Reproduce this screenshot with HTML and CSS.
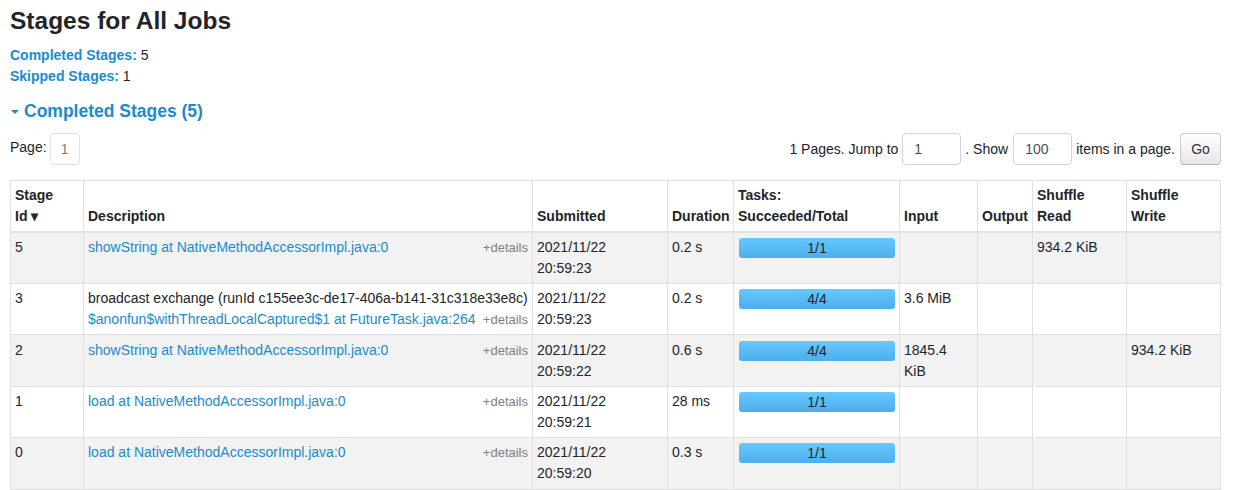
FILE: index.html
```html
<!DOCTYPE html>
<html>
<head>
<meta charset="utf-8">
<link rel="stylesheet" href="styles.css">
</head>
<body>
<div class="page">
  <h3 class="title">Stages for All Jobs</h3>
  <ul class="summary">
    <li><a class="lbl">Completed Stages:</a> 5</li>
    <li><a class="lbl">Skipped Stages:</a> 1</li>
  </ul>
  <h4 class="collapse-head"><span class="arrow"></span>Completed Stages (5)</h4>

  <div class="pager">
    <div class="pager-left">
      <span class="page-label">Page:</span>
      <span class="page-box">1</span>
    </div>
    <div class="pager-right">
      <span>1 Pages. Jump to</span>
      <span class="inp jump">1</span>
      <span>. Show</span>
      <span class="inp show">100</span>
      <span>items in a page.</span>
      <span class="go">Go</span>
    </div>
  </div>

  <table class="stages">
    <colgroup>
      <col class="c-id"><col class="c-desc"><col class="c-sub"><col class="c-dur"><col class="c-task"><col class="c-in"><col class="c-out"><col class="c-sr"><col class="c-sw">
    </colgroup>
    <thead>
      <tr>
        <th>Stage<br>Id ▾</th>
        <th>Description</th>
        <th>Submitted</th>
        <th>Duration</th>
        <th>Tasks:<br>Succeeded/Total</th>
        <th>Input</th>
        <th>Output</th>
        <th>Shuffle<br>Read</th>
        <th>Shuffle<br>Write</th>
      </tr>
    </thead>
    <tbody>
      <tr class="odd">
        <td>5</td>
        <td><span class="details">+details</span><a class="name">showString at NativeMethodAccessorImpl.java:0</a></td>
        <td>2021/11/22<br>20:59:23</td>
        <td>0.2 s</td>
        <td><div class="progress"><span>1/1</span></div></td>
        <td></td>
        <td></td>
        <td>934.2 KiB</td>
        <td></td>
      </tr>
      <tr>
        <td>3</td>
        <td><div class="desc-text">broadcast exchange (runId c155ee3c-de17-406a-b141-31c318e33e8c)</div><span class="details">+details</span><a class="name">$anonfun$withThreadLocalCaptured$1 at FutureTask.java:264</a></td>
        <td>2021/11/22<br>20:59:23</td>
        <td>0.2 s</td>
        <td><div class="progress"><span>4/4</span></div></td>
        <td>3.6 MiB</td>
        <td></td>
        <td></td>
        <td></td>
      </tr>
      <tr class="odd">
        <td>2</td>
        <td><span class="details">+details</span><a class="name">showString at NativeMethodAccessorImpl.java:0</a></td>
        <td>2021/11/22<br>20:59:22</td>
        <td>0.6 s</td>
        <td><div class="progress"><span>4/4</span></div></td>
        <td>1845.4<br>KiB</td>
        <td></td>
        <td></td>
        <td>934.2 KiB</td>
      </tr>
      <tr>
        <td>1</td>
        <td><span class="details">+details</span><a class="name">load at NativeMethodAccessorImpl.java:0</a></td>
        <td>2021/11/22<br>20:59:21</td>
        <td>28 ms</td>
        <td><div class="progress"><span>1/1</span></div></td>
        <td></td>
        <td></td>
        <td></td>
        <td></td>
      </tr>
      <tr class="odd">
        <td>0</td>
        <td><span class="details">+details</span><a class="name">load at NativeMethodAccessorImpl.java:0</a></td>
        <td>2021/11/22<br>20:59:20</td>
        <td>0.3 s</td>
        <td><div class="progress"><span>1/1</span></div></td>
        <td></td>
        <td></td>
        <td></td>
        <td></td>
      </tr>
    </tbody>
  </table>
</div>
</body>
</html>
```

FILE: styles.css
```css
html, body {
  margin: 0;
  padding: 0;
  background: #fff;
}
body {
  font-family: "Liberation Sans", Arial, sans-serif;
  font-size: 14px;
  line-height: 21px;
  color: #212529;
}
.page {
  padding: 0 10px;
}
.title {
  margin: 6px 0 10px 0;
  font-size: 24.5px;
  line-height: 29px;
  font-weight: bold;
  color: #212529;
}
.summary {
  list-style: none;
  margin: 0;
  padding: 0;
}
.lbl {
  color: #1a8bcf;
  font-weight: bold;
}
.collapse-head {
  margin: 13px 0 0 0;
  font-size: 17.5px;
  line-height: 22px;
  font-weight: bold;
  color: #1a8bcf;
  display: flex;
  align-items: center;
}
.arrow {
  display: inline-block;
  width: 0;
  height: 0;
  border-left: 4.5px solid transparent;
  border-right: 4.5px solid transparent;
  border-top: 4.5px solid #1a8bcf;
  margin-left: 0.5px;
  margin-right: 5.5px;
  margin-top: 1px;
}
.pager {
  margin-top: 11px;
  display: flex;
  justify-content: space-between;
  align-items: flex-start;
  margin-right: 3px;
}
.pager-left {
  display: flex;
  align-items: flex-start;
}
.page-label {
  padding-top: 4px;
  margin-right: 3px;
}
.page-box {
  display: inline-block;
  box-sizing: border-box;
  height: 32px;
  width: 30px;
  border: 1px solid #dee2e6;
  border-radius: 4px;
  text-align: center;
  line-height: 30px;
  color: #8a7e72;
}
.pager-right {
  display: flex;
  align-items: center;
  gap: 4px;
}
.inp {
  display: inline-block;
  box-sizing: border-box;
  height: 32px;
  border: 1px solid #ced4da;
  border-radius: 4px;
  line-height: 30px;
  padding: 0 11px;
  color: #495057;
}
.jump { width: 59px; }
.show { width: 59px; margin-left: 1px; }
.go {
  display: inline-block;
  box-sizing: border-box;
  height: 32px;
  width: 41px;
  margin-left: 1px;
  border: 1px solid #ccc;
  border-bottom-color: #b3b3b3;
  border-radius: 4px;
  background: linear-gradient(#ffffff, #e6e6e6);
  text-align: center;
  line-height: 30px;
  color: #333;
}
.stages {
  margin-top: 15px;
  border-collapse: collapse;
  table-layout: fixed;
  width: 1211px;
  border: 1px solid #dee2e6;
}
.c-id { width: 73px; }
.c-desc { width: 449px; }
.c-sub { width: 135px; }
.c-dur { width: 66px; }
.c-task { width: 166px; }
.c-in { width: 78px; }
.c-out { width: 55px; }
.c-sr { width: 94px; }
.c-sw { width: 94px; }
.stages th, .stages td {
  border: 1px solid #dee2e6;
  padding: 4.2px 4px;
  text-align: left;
}
.stages th {
  vertical-align: bottom;
  border-bottom-width: 2px;
  font-weight: bold;
  padding-bottom: 3.5px;
}
.stages td {
  vertical-align: top;
}
.stages tr.odd td {
  background: #f2f2f2;
}
.name {
  color: #1a8bcf;
}
.details {
  float: right;
  font-size: 13px;
  color: #808080;
}
.desc-text {
  white-space: nowrap;
}
.progress {
  position: relative;
  height: 20px;
  margin-top: 1px;
  margin-left: 1px;
  margin-right: 0;
  border-radius: 3px;
  background: linear-gradient(#66c9fd, #4dadee);
  text-align: center;
  line-height: 20px;
  color: #212529;
}
```
